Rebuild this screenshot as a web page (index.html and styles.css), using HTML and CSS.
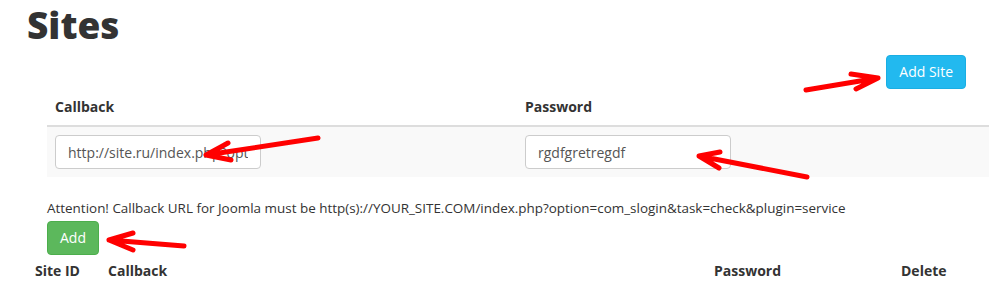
FILE: index.html
```html
<!DOCTYPE html>
<html>
<head>
<meta charset="utf-8">
<link rel="stylesheet" href="styles.css">
</head>
<body>
<div class="page">
  <h1 class="title">Sites</h1>
  <div class="toolbar">
    <button class="btn btn-info">Add Site</button>
  </div>
  <table class="form-table">
    <thead>
      <tr><th class="col-cb">Callback</th><th>Password</th></tr>
    </thead>
    <tbody>
      <tr>
        <td class="col-cb"><input class="field" type="text" value="http://site.ru/index.php?option=com_slogin"></td>
        <td><input class="field" type="text" value="rgdfgretregdf"></td>
      </tr>
    </tbody>
  </table>
  <p class="note">Attention! Callback URL for Joomla must be http(s)://YOUR_SITE.COM/index.php?option=com_slogin&amp;task=check&amp;plugin=service</p>
  <button class="btn btn-success">Add</button>
  <table class="list-table">
    <thead>
      <tr><th class="c-id">Site ID</th><th class="c-cb">Callback</th><th class="c-pw">Password</th><th>Delete</th></tr>
    </thead>
  </table>
</div>
<svg class="arrows" width="989" height="287" viewBox="0 0 989 287">
  <g fill="none" stroke="#ff0000" stroke-width="5" stroke-linecap="round" stroke-linejoin="round">
    <path d="M806 90 L878 78 M851 74 L878 78 L856 89"/>
    <path d="M318 138 L206 155 M228 143 L206 155 L231 160"/>
    <path d="M807 177 L699 156 M720 152 L699 156 L719 168"/>
    <path d="M184 246 L109 240 M133 233 L109 240 L133 250"/>
  </g>
</svg>
</body>
</html>
```
FILE: styles.css
```css
html, body {
  margin: 0;
  padding: 0;
  background: #fff;
  overflow: hidden;
}
body {
  font-family: "Open Sans", "DejaVu Sans", sans-serif;
  font-size: 14px;
  line-height: 20px;
  color: #333;
  position: relative;
  width: 989px;
  height: 287px;
}
.page {
  padding: 0 23px 0 27px;
}
.title {
  margin: 0;
  font-size: 37px;
  line-height: 50px;
  font-weight: 800;
  color: #333;
}
.toolbar {
  display: flex;
  justify-content: flex-end;
  margin-top: 5px;
}
.btn {
  font-family: inherit;
  font-size: 14px;
  line-height: 20px;
  height: 34px;
  padding: 6px 12px;
  border: 1px solid transparent;
  border-radius: 4px;
  color: #fff;
  cursor: pointer;
}
.btn-info {
  background: #22b9ef;
  border-color: #1aaee3;
}
.btn-success {
  background: #5cb85c;
  border-color: #4cae4c;
  margin-left: 20px;
  display: block;
}
.form-table {
  border-collapse: collapse;
  margin-left: 20px;
  width: calc(100% + 3px);
}
.form-table th {
  text-align: left;
  padding: 8px;
  font-weight: 700;
  border-bottom: 2px solid #ddd;
}
.form-table td {
  padding: 8px;
  background: #f9f9f9;
}
.form-table .col-cb {
  width: 454px;
}
.field {
  box-sizing: border-box;
  width: 206px;
  height: 34px;
  padding: 6px 12px;
  font-family: inherit;
  font-size: 14px;
  color: #555;
  border: 1px solid #ccc;
  border-radius: 4px;
  background: #fff;
  display: block;
}
.note {
  margin: 21px 0 3px 20px;
  font-size: 13.45px;
  color: #333;
}
.list-table {
  border-collapse: collapse;
  width: 100%;
}
.list-table th {
  text-align: left;
  padding: 6px 8px 8px;
  font-weight: 700;
}
.list-table .c-id { width: 57px; }
.list-table .c-cb { width: 590px; }
.list-table .c-pw { width: 171px; }
.arrows {
  position: absolute;
  left: 0;
  top: 0;
  pointer-events: none;
}
```
